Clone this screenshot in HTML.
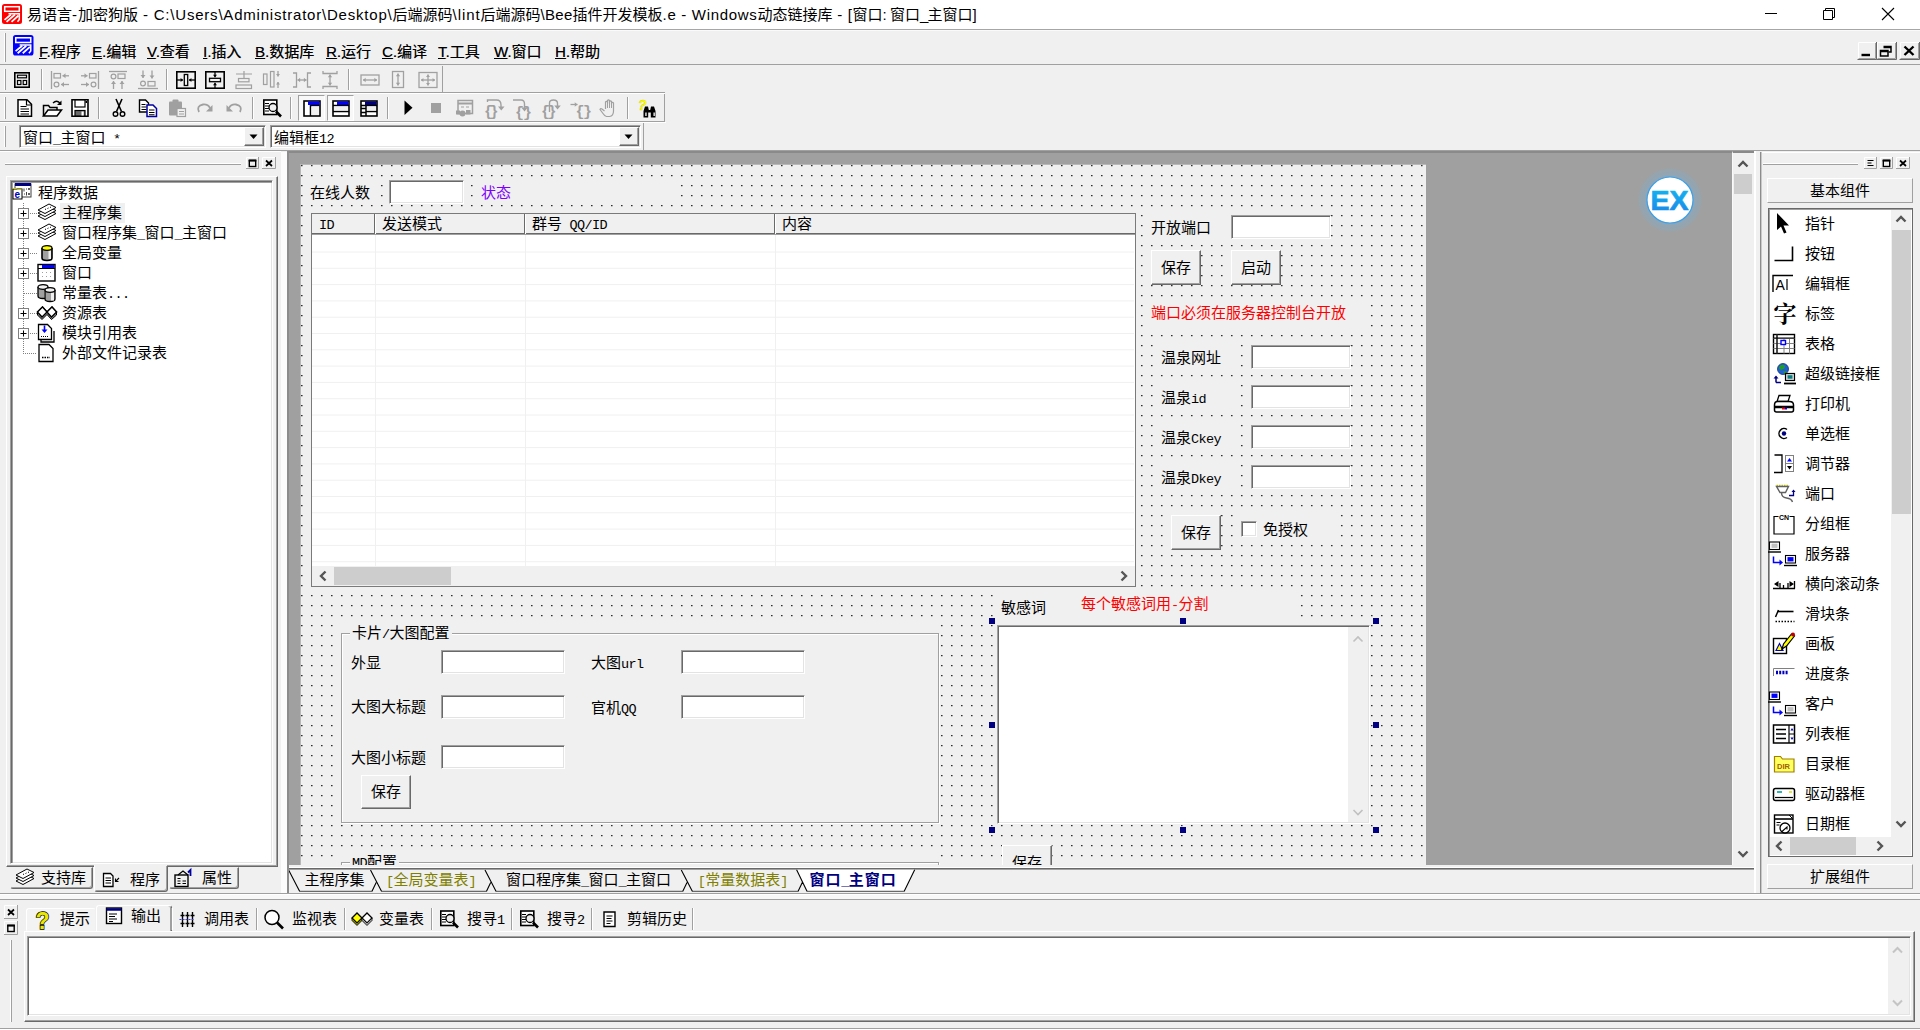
<!DOCTYPE html><html lang="zh-CN"><head><meta charset="utf-8"><title>易语言-加密狗版</title><style>
html,body{margin:0;padding:0}
body{width:1920px;height:1030px;overflow:hidden;background:#f0f0f0;position:relative;
 font-family:"Liberation Sans","Noto Sans CJK SC",sans-serif;font-size:15px;color:#000}
div,svg,span.a{position:absolute;box-sizing:border-box}
svg{overflow:visible}
.t{white-space:nowrap;line-height:20px;height:20px}
.s{font-family:"Liberation Mono","Noto Sans CJK SC",monospace;font-size:15px;letter-spacing:0;margin-top:2px}
.s b{font-weight:normal;font-family:"Liberation Mono",monospace;font-size:13.5px;letter-spacing:-0.6px}
.y{font-family:"Liberation Sans","Noto Sans CJK SC",sans-serif;font-size:15px}
.sunk{border:1px solid;border-color:#a0a0a0 #fff #fff #a0a0a0}
.sunk2{border:1px solid;border-color:#696969 #e3e3e3 #e3e3e3 #696969}
.rais{border:1px solid;border-color:#fff #a0a0a0 #a0a0a0 #fff}
.btn{background:#f0f0f0;border:1px solid;border-color:#fff #696969 #696969 #fff;box-shadow:inset -1px -1px 0 #a0a0a0;text-align:center}
.ed{background:#fff;border:1px solid;border-color:#a0a0a0 #fff #fff #a0a0a0;box-shadow:inset 1px 1px 0 #696969, inset -1px -1px 0 #e3e3e3}
.lbl{background:#f0f0f0}
.l{letter-spacing:0}
.hd{background:#000080;width:6px;height:6px}
</style></head><body>
<!-- p_chrome -->
<div style="left:0px;top:0px;width:1920px;height:30px;background:#fff;border-bottom:1px solid #a6a6a6"></div>
<svg style="left:2px;top:4px;" width="20" height="20" viewBox="0 0 20 20"><rect x="0" y="0" width="20" height="20" rx="2.500" fill="#ff0000"/><rect x="2.700" y="2.700" width="14.600" height="4.600" fill="none" stroke="#fff" stroke-width="1.500"/><path d="M6.500 9.700H17.300V15.500L15.500 17.800" fill="none" stroke="#fff" stroke-width="1.500"/><path d="M9 10.500L2.500 15.800M13 10.500L4.500 17.800M16.500 11.500L9.500 17.800" fill="none" stroke="#fff" stroke-width="1.700"/></svg>
<div id="ttl" class="t y" style="left:27px;top:5px">易语言<span style="letter-spacing:1.0px">-</span>加密狗版<span style="letter-spacing:0.792px"> - C:\Users\Administrator\Desktop\</span>后端源码<span style="letter-spacing:0.931px">\lint</span>后端源码<span style="letter-spacing:0.285px">\Bee</span>插件开发模板<span style="letter-spacing:0.691px">.e - Windows</span>动态链接库<span style="letter-spacing:0.625px"> - [</span>窗口<span style="letter-spacing:-0.422px">: </span>窗口<span style="letter-spacing:-0.844px">_</span>主窗口<span style="letter-spacing:0.328px">]</span></div>
<svg style="left:1760px;top:0px;" width="160" height="30" viewBox="0 0 160 30"><path d="M5 13.5h12" stroke="#000" stroke-width="1"/><path d="M63.5 10.5h9v9h-9zM65.5 10.5v-2h9v9h-2" stroke="#000" stroke-width="1" fill="none"/><path d="M122 8l12 12M134 8l-12 12" stroke="#000" stroke-width="1.1"/></svg>
<div style="left:0px;top:30px;width:1920px;height:35px;background:#f0f0f0;border-bottom:1px solid #a0a0a0"></div>
<div style="left:0px;top:30px;width:1920px;height:1px;background:#fafafa"></div>
<div style="left:4px;top:33px;width:2px;height:29px;border-left:1px solid #fff;border-right:1px solid #a0a0a0"></div>
<svg style="left:12.5px;top:35px;" width="20.5" height="20.5" viewBox="0 0 20 20"><rect x="0" y="0" width="20" height="20" rx="2.500" fill="#0000ff"/><rect x="2.700" y="2.700" width="14.600" height="4.600" fill="none" stroke="#fff" stroke-width="1.500"/><path d="M6.500 9.700H17.300V15.500L15.500 17.800" fill="none" stroke="#fff" stroke-width="1.500"/><path d="M9 10.500L2.500 15.800M13 10.500L4.500 17.800M16.500 11.500L9.500 17.800" fill="none" stroke="#fff" stroke-width="1.700"/></svg>
<div class="t y" style="left:39px;top:42px;text-shadow:0.300px 0 0 rgba(0,0,0,0.600)"><u>F</u>.程序</div>
<div class="t y" style="left:92px;top:42px;text-shadow:0.300px 0 0 rgba(0,0,0,0.600)"><u>E</u>.编辑</div>
<div class="t y" style="left:147px;top:42px;text-shadow:0.300px 0 0 rgba(0,0,0,0.600)"><u>V</u>.查看</div>
<div class="t y" style="left:203px;top:42px;text-shadow:0.300px 0 0 rgba(0,0,0,0.600)"><u>I</u>.插入</div>
<div class="t y" style="left:255px;top:42px;text-shadow:0.300px 0 0 rgba(0,0,0,0.600)"><u>B</u>.数据库</div>
<div class="t y" style="left:326px;top:42px;text-shadow:0.300px 0 0 rgba(0,0,0,0.600)"><u>R</u>.运行</div>
<div class="t y" style="left:382px;top:42px;text-shadow:0.300px 0 0 rgba(0,0,0,0.600)"><u>C</u>.编译</div>
<div class="t y" style="left:438px;top:42px;text-shadow:0.300px 0 0 rgba(0,0,0,0.600)"><u>T</u>.工具</div>
<div class="t y" style="left:494px;top:42px;text-shadow:0.300px 0 0 rgba(0,0,0,0.600)"><u>W</u>.窗口</div>
<div class="t y" style="left:555px;top:42px;text-shadow:0.300px 0 0 rgba(0,0,0,0.600)"><u>H</u>.帮助</div>
<svg style="left:1858px;top:42px;" width="19" height="18" viewBox="0 0 19 18"><rect x="0" y="0" width="19" height="18" fill="#f0f0f0"/><path d="M0.500 17.500v-17h18" stroke="#fff" fill="none"/><path d="M18.5 0v17.500h-19" stroke="#696969" fill="none"/><path d="M17.5 1v15.500h-17" stroke="#a0a0a0" fill="none"/><path d="M3.500 13h8.500" stroke="#000" stroke-width="2.400"/></svg><svg style="left:1877px;top:42px;" width="20" height="18" viewBox="0 0 20 18"><rect x="0" y="0" width="20" height="18" fill="#f0f0f0"/><path d="M0.500 17.500v-17h19" stroke="#fff" fill="none"/><path d="M19.5 0v17.500h-20" stroke="#696969" fill="none"/><path d="M18.5 1v15.500h-18" stroke="#a0a0a0" fill="none"/><path d="M6.500 4.500h7.500v5.500h-2.500M6.500 5.500h7.500" stroke="#000" stroke-width="1.500" fill="none"/><path d="M3.500 8.500h7.500v5.500h-7.500zM3.500 9.500h7.500" stroke="#000" stroke-width="1.500" fill="none"/></svg><svg style="left:1900px;top:42px;" width="20" height="18" viewBox="0 0 20 18"><rect x="0" y="0" width="20" height="18" fill="#f0f0f0"/><path d="M0.500 17.500v-17h19" stroke="#fff" fill="none"/><path d="M19.5 0v17.500h-20" stroke="#696969" fill="none"/><path d="M18.5 1v15.500h-18" stroke="#a0a0a0" fill="none"/><path d="M4.500 4.500l9 8.500M13.500 4.500l-9 8.500" stroke="#000" stroke-width="2.400"/></svg>
<div style="left:0px;top:66px;width:443px;height:27px;border-right:1px solid #a0a0a0;border-bottom:1px solid #a0a0a0"></div>
<div style="left:0px;top:93px;width:444px;height:1px;background:#fff"></div>
<div style="left:443px;top:92px;width:222px;height:1px;background:#a0a0a0"></div>
<div style="left:443px;top:93px;width:222px;height:1px;background:#fff"></div>
<div style="left:4px;top:69px;width:2px;height:21px;border-left:1px solid #fff;border-right:1px solid #a0a0a0"></div>
<svg style="left:12px;top:70px;" width="20" height="20" viewBox="0 0 20 20"><rect x="2.8" y="2.8" width="14.4" height="14.4" fill="none" stroke="#000" stroke-width="1.6"/><rect x="5.5" y="5.2" width="9" height="2.6" fill="none" stroke="#000" stroke-width="1.2"/><rect x="5.5" y="10.5" width="3.4" height="4" fill="none" stroke="#000" stroke-width="1.2"/><rect x="11.2" y="10.5" width="3.4" height="4" fill="none" stroke="#000" stroke-width="1.2"/></svg><div style="left:41px;top:69px;width:2px;height:21px;border-left:1px solid #a0a0a0;border-right:1px solid #fff"></div><svg style="left:50px;top:70px;" width="20" height="20" viewBox="0 0 20 20"><path d="M1.5 1v18" stroke="#a0a0a0" stroke-width="1.3"/><rect x="4" y="3.5" width="6.5" height="4.5" fill="none" stroke="#a0a0a0" stroke-width="1.2"/><circle cx="6.5" cy="14.5" r="2.4" fill="none" stroke="#a0a0a0" stroke-width="1.2"/><path d="M19 5.8H12.5" stroke="#a0a0a0" stroke-width="1.3"/><path d="M12.5 5.8l3.0 -2.5v5.0z" fill="#a0a0a0"/><path d="M19 14.5H11" stroke="#a0a0a0" stroke-width="1.3"/><path d="M11 14.5l3.0 -2.5v5.0z" fill="#a0a0a0"/></svg><svg style="left:80px;top:70px;" width="20" height="20" viewBox="0 0 20 20"><path d="M18.5 1v18" stroke="#a0a0a0" stroke-width="1.3"/><rect x="9.5" y="3.5" width="6.5" height="4.5" fill="none" stroke="#a0a0a0" stroke-width="1.2"/><circle cx="13.5" cy="14.5" r="2.4" fill="none" stroke="#a0a0a0" stroke-width="1.2"/><path d="M1 5.8H7.5" stroke="#a0a0a0" stroke-width="1.3"/><path d="M7.5 5.8l-3.0 -2.5v5.0z" fill="#a0a0a0"/><path d="M1 14.5H9" stroke="#a0a0a0" stroke-width="1.3"/><path d="M9 14.5l-3.0 -2.5v5.0z" fill="#a0a0a0"/></svg><svg style="left:108px;top:70px;" width="20" height="20" viewBox="0 0 20 20"><path d="M1 1.5h18" stroke="#a0a0a0" stroke-width="1.3"/><circle cx="5.5" cy="6.5" r="2.4" fill="none" stroke="#a0a0a0" stroke-width="1.2"/><rect x="10" y="4" width="7" height="4.5" fill="none" stroke="#a0a0a0" stroke-width="1.2"/><path d="M5.5 19V11" stroke="#a0a0a0" stroke-width="1.3"/><path d="M5.5 11l-2.5 3.0h5.0z" fill="#a0a0a0"/><path d="M14 19V11" stroke="#a0a0a0" stroke-width="1.3"/><path d="M14 11l-2.5 3.0h5.0z" fill="#a0a0a0"/></svg><svg style="left:138px;top:70px;" width="20" height="20" viewBox="0 0 20 20"><path d="M0 18.5h20" stroke="#a0a0a0" stroke-width="1.3"/><circle cx="5" cy="13.5" r="2.4" fill="none" stroke="#a0a0a0" stroke-width="1.2"/><rect x="10" y="11.5" width="7" height="4.5" fill="none" stroke="#a0a0a0" stroke-width="1.2"/><path d="M5 0.5V8" stroke="#a0a0a0" stroke-width="1.3"/><path d="M5 8l-2.5 -3.0h5.0z" fill="#a0a0a0"/><path d="M14 0.5V8.5" stroke="#a0a0a0" stroke-width="1.3"/><path d="M14 8.5l-2.5 -3.0h5.0z" fill="#a0a0a0"/></svg><div style="left:166px;top:69px;width:2px;height:21px;border-left:1px solid #a0a0a0;border-right:1px solid #fff"></div><svg style="left:176px;top:70px;" width="20" height="20" viewBox="0 0 20 20"><rect x="0.8" y="1.8" width="18.4" height="16.4" fill="none" stroke="#000" stroke-width="1.6"/><rect x="8.3" y="4.5" width="3.4" height="11" fill="none" stroke="#000" stroke-width="1.3"/><path d="M1 10H7" stroke="#000" stroke-width="1.3"/><path d="M7 10l-2.4 -2v4z" fill="#000"/><path d="M19 10H13" stroke="#000" stroke-width="1.3"/><path d="M13 10l2.4 -2v4z" fill="#000"/></svg><svg style="left:205px;top:70px;" width="20" height="20" viewBox="0 0 20 20"><rect x="0.8" y="1.8" width="18.4" height="16.4" fill="none" stroke="#000" stroke-width="1.6"/><rect x="4.5" y="8.3" width="11" height="3.4" fill="none" stroke="#000" stroke-width="1.3"/><path d="M10 2V7.2" stroke="#000" stroke-width="1.3"/><path d="M10 7.2l-2 -2.4h4z" fill="#000"/><path d="M10 18V12.8" stroke="#000" stroke-width="1.3"/><path d="M10 12.8l-2 2.4h4z" fill="#000"/></svg><svg style="left:234px;top:70px;" width="20" height="20" viewBox="0 0 20 20"><rect x="2" y="15" width="15.5" height="3.5" fill="none" stroke="#a0a0a0" stroke-width="1.2"/><rect x="4.5" y="8.5" width="10.5" height="3.3" fill="none" stroke="#a0a0a0" stroke-width="1.2"/><path d="M10 1v7M2 4h16" stroke="#a0a0a0" stroke-width="1.2"/></svg><svg style="left:262px;top:70px;" width="20" height="20" viewBox="0 0 20 20"><rect x="1.5" y="4" width="3.5" height="10.5" fill="none" stroke="#a0a0a0" stroke-width="1.2"/><rect x="8.5" y="1.5" width="3.5" height="15.5" fill="none" stroke="#a0a0a0" stroke-width="1.2"/><path d="M16 1V6.5" stroke="#a0a0a0" stroke-width="1.3"/><path d="M16 6.5l-2 -2.4h4z" fill="#a0a0a0"/><path d="M16 18V12" stroke="#a0a0a0" stroke-width="1.3"/><path d="M16 12l-2 2.4h4z" fill="#a0a0a0"/></svg><svg style="left:292px;top:70px;" width="20" height="20" viewBox="0 0 20 20"><path d="M1 3h3.5v14H1M19 3h-3.5v14H19" fill="none" stroke="#a0a0a0" stroke-width="1.3"/><path d="M10 10H5.5" stroke="#a0a0a0" stroke-width="1.3"/><path d="M5.5 10l2.64 -2.2v4.4z" fill="#a0a0a0"/><path d="M10 10H14.5" stroke="#a0a0a0" stroke-width="1.3"/><path d="M14.5 10l-2.64 -2.2v4.4z" fill="#a0a0a0"/></svg><svg style="left:320px;top:70px;" width="20" height="20" viewBox="0 0 20 20"><path d="M3 1v2.5h14V1M3 19v-2.5h14V19" fill="none" stroke="#a0a0a0" stroke-width="1.3"/><path d="M10 10V4.5" stroke="#a0a0a0" stroke-width="1.3"/><path d="M10 4.5l-2.2 2.64h4.4z" fill="#a0a0a0"/><path d="M10 10V15.5" stroke="#a0a0a0" stroke-width="1.3"/><path d="M10 15.5l-2.2 -2.64h4.4z" fill="#a0a0a0"/></svg><div style="left:348px;top:69px;width:2px;height:21px;border-left:1px solid #a0a0a0;border-right:1px solid #fff"></div><svg style="left:360px;top:70px;" width="20" height="20" viewBox="0 0 20 20"><rect x="1" y="5" width="18" height="10" fill="none" stroke="#a0a0a0" stroke-width="1.3"/><path d="M10 10H3" stroke="#a0a0a0" stroke-width="1.3"/><path d="M3 10l2.64 -2.2v4.4z" fill="#a0a0a0"/><path d="M10 10H17" stroke="#a0a0a0" stroke-width="1.3"/><path d="M17 10l-2.64 -2.2v4.4z" fill="#a0a0a0"/></svg><svg style="left:388px;top:70px;" width="20" height="20" viewBox="0 0 20 20"><rect x="4.5" y="1.5" width="11" height="16" fill="none" stroke="#a0a0a0" stroke-width="1.3"/><path d="M10 10V3.5" stroke="#a0a0a0" stroke-width="1.3"/><path d="M10 3.5l-2.2 2.64h4.4z" fill="#a0a0a0"/><path d="M10 10V15.5" stroke="#a0a0a0" stroke-width="1.3"/><path d="M10 15.5l-2.2 -2.64h4.4z" fill="#a0a0a0"/></svg><svg style="left:418px;top:70px;" width="20" height="20" viewBox="0 0 20 20"><rect x="1" y="2.5" width="18" height="15" fill="none" stroke="#a0a0a0" stroke-width="1.3"/><path d="M10 10H3" stroke="#a0a0a0" stroke-width="1.3"/><path d="M3 10l2.4 -2v4z" fill="#a0a0a0"/><path d="M10 10H17" stroke="#a0a0a0" stroke-width="1.3"/><path d="M17 10l-2.4 -2v4z" fill="#a0a0a0"/><path d="M10 10V4.5" stroke="#a0a0a0" stroke-width="1.3"/><path d="M10 4.5l-2 2.4h4z" fill="#a0a0a0"/><path d="M10 10V15.5" stroke="#a0a0a0" stroke-width="1.3"/><path d="M10 15.5l-2 -2.4h4z" fill="#a0a0a0"/></svg>
<div style="left:0px;top:94px;width:665px;height:28px;border-right:1px solid #a0a0a0;border-bottom:1px solid #a0a0a0"></div>
<div style="left:0px;top:122px;width:666px;height:1px;background:#fff"></div>
<div style="left:4px;top:97px;width:2px;height:22px;border-left:1px solid #fff;border-right:1px solid #a0a0a0"></div>
<svg style="left:15px;top:98px;" width="20" height="20" viewBox="0 0 20 20"><path d="M3 1.8h9l4.5 4.5V18.2H3z" fill="#fff" stroke="#000" stroke-width="1.5"/><path d="M11.5 2v5h5" fill="none" stroke="#000" stroke-width="1.2"/><path d="M5.5 8.5h6M5.5 11h8.5M5.5 13.500h8.5M5.500 16h8.500" stroke="#000" stroke-width="1.2"/></svg><svg style="left:42px;top:98px;" width="20" height="20" viewBox="0 0 20 20"><path d="M1.500 18V7.500h5l1.500 2h7V12" fill="none" stroke="#000" stroke-width="1.500"/><path d="M1.500 18l4.500-6h13.500l-4.500 6z" fill="#fff" stroke="#000" stroke-width="1.500"/><path d="M11 5q3.500-3.500 7 0" fill="none" stroke="#000" stroke-width="1.300"/><path d="M19.500 2.500v4.500h-4.500z" fill="#000"/></svg><svg style="left:70px;top:98px;" width="20" height="20" viewBox="0 0 20 20"><path d="M2 1.800h16V18.200H2z" fill="#fff" stroke="#000" stroke-width="1.600"/><rect x="5" y="2" width="10" height="7" fill="#fff" stroke="#000" stroke-width="1.200"/><rect x="5" y="12.500" width="10" height="5.500" fill="#696969" stroke="#000" stroke-width="1.200"/><rect x="11.500" y="13.500" width="2.200" height="4" fill="#fff"/><rect x="15.500" y="3" width="1.500" height="2" fill="#000"/></svg><div style="left:98px;top:97px;width:2px;height:22px;border-left:1px solid #a0a0a0;border-right:1px solid #fff"></div><svg style="left:109px;top:98px;" width="20" height="20" viewBox="0 0 20 20"><path d="M7 1l5.500 12.500M13 1l-5.500 12.500" stroke="#000" stroke-width="1.600" fill="none"/><circle cx="6.500" cy="16" r="2.300" fill="none" stroke="#000" stroke-width="1.400"/><circle cx="13.500" cy="16" r="2.300" fill="none" stroke="#000" stroke-width="1.400"/></svg><svg style="left:138px;top:98px;" width="20" height="20" viewBox="0 0 20 20"><path d="M1.500 2h6l3 3v9h-9z" fill="#fff" stroke="#000" stroke-width="1.400"/><path d="M3.500 6.500h4M3.500 9h5M3.500 11.500h5" stroke="#000" stroke-width="1.100"/><path d="M9 7h6l3.500 3.500V18.500H9z" fill="#fff" stroke="#0000a0" stroke-width="1.500"/><path d="M11 12h5.500M11 14.500h5.500M11 16.800h5.500" stroke="#000" stroke-width="1.100"/></svg><svg style="left:167px;top:98px;" width="20" height="20" viewBox="0 0 20 20"><rect x="2" y="3.500" width="13" height="14" rx="1" fill="#a0a0a0"/><rect x="5.500" y="1.500" width="6" height="3.500" rx="1" fill="#a0a0a0"/><rect x="10" y="10.500" width="8.500" height="8" fill="#f0f0f0" stroke="#a0a0a0" stroke-width="1.200"/><path d="M12 13.500h5M12 16h5" stroke="#a0a0a0" stroke-width="1"/></svg><svg style="left:195px;top:98px;" width="20" height="20" viewBox="0 0 20 20"><path d="M4 14q-3-6 4-7.500q5-0.500 7 3.500" fill="none" stroke="#a0a0a0" stroke-width="1.800"/><path d="M17.500 7v6.500h-6.500z" fill="#a0a0a0"/></svg><svg style="left:224px;top:98px;" width="20" height="20" viewBox="0 0 20 20"><path d="M16 14q3-6-4-7.500q-5-0.500-7 3.500" fill="none" stroke="#a0a0a0" stroke-width="1.800"/><path d="M2.500 7v6.500h6.500z" fill="#a0a0a0"/></svg><div style="left:252px;top:97px;width:2px;height:22px;border-left:1px solid #a0a0a0;border-right:1px solid #fff"></div><svg style="left:262px;top:98px;" width="20" height="20" viewBox="0 0 20 20"><rect x="1.800" y="2" width="13" height="14.500" fill="#fff" stroke="#000" stroke-width="1.600"/><path d="M3 5.500h4M3 8h4M3 10.500h4M3 13h4" stroke="#000" stroke-width="1.200"/><circle cx="11" cy="9.500" r="4" fill="#f0f0f0" stroke="#000" stroke-width="1.300"/><path d="M14 13.500l5 5" stroke="#000" stroke-width="2.600"/></svg><div style="left:290px;top:97px;width:2px;height:22px;border-left:1px solid #a0a0a0;border-right:1px solid #fff"></div><div style="left:298px;top:95px;width:27px;height:26px;background:#f8f8f8;border:1px solid;border-color:#a0a0a0 #fff #fff #a0a0a0"></div><div style="left:327px;top:95px;width:27px;height:26px;background:#f8f8f8;border:1px solid;border-color:#a0a0a0 #fff #fff #a0a0a0"></div><svg style="left:302px;top:98px;" width="20" height="20" viewBox="0 0 20 20"><rect x="2" y="3" width="16" height="15" fill="#fff" stroke="#000" stroke-width="1.600"/><rect x="6" y="3.500" width="11.500" height="3.500" fill="#0000ff"/><path d="M8.500 7v11M8.500 7.500h9" stroke="#000" stroke-width="1.500"/><rect x="9.500" y="8.500" width="7.500" height="8.500" fill="#f0f0f0"/></svg><svg style="left:331px;top:98px;" width="20" height="20" viewBox="0 0 20 20"><rect x="2" y="3" width="16" height="15" fill="#fff" stroke="#000" stroke-width="1.600"/><rect x="6" y="3.500" width="11.500" height="3.500" fill="#0000ff"/><path d="M2 7.500h16M2 13.500h16" stroke="#000" stroke-width="1.500"/><rect x="3" y="8.500" width="14" height="4" fill="#f0f0f0"/></svg><svg style="left:359px;top:98px;" width="20" height="20" viewBox="0 0 20 20"><rect x="2" y="3" width="16" height="15" fill="#fff" stroke="#000" stroke-width="1.600"/><rect x="6" y="3.500" width="11.500" height="3.500" fill="#000080"/><path d="M7 7v11M2 7.500h16M7 13.500h11M2 10.500h5M2 14.500h5" stroke="#000" stroke-width="1.500"/><rect x="8" y="8.500" width="9" height="4" fill="#f0f0f0"/></svg><div style="left:387px;top:97px;width:2px;height:22px;border-left:1px solid #a0a0a0;border-right:1px solid #fff"></div><svg style="left:398px;top:98px;" width="20" height="20" viewBox="0 0 20 20"><path d="M6.500 2.500v14.500l8-7.250z" fill="#000"/></svg><svg style="left:426px;top:98px;" width="20" height="20" viewBox="0 0 20 20"><rect x="5" y="5" width="10" height="10" fill="#a0a0a0"/></svg><svg style="left:454px;top:98px;" width="20" height="20" viewBox="0 0 20 20"><rect x="4" y="2.500" width="14.500" height="13" fill="none" stroke="#a0a0a0" stroke-width="1.500"/><path d="M4 5.500h14.500" stroke="#a0a0a0" stroke-width="2"/><path d="M7 9h3M12 9h3" stroke="#a0a0a0" stroke-width="1.200"/><circle cx="8.500" cy="15.500" r="3" fill="#a0a0a0"/><rect x="2" y="12.500" width="4" height="4" fill="#a0a0a0"/><rect x="12" y="12" width="4.500" height="4.500" fill="#a0a0a0"/></svg><svg style="left:484px;top:98px;" width="20" height="20" viewBox="0 0 20 20"><text x="0" y="17.500" font-family="Liberation Mono,monospace" font-size="15" font-weight="bold" fill="#a0a0a0" letter-spacing="-3.500">{}</text><path d="M3.500 4V2h9q4.500 0 4.500 5V9" fill="none" stroke="#a0a0a0" stroke-width="1.400"/><path d="M14 8.500h6.500l-3.250 4z" fill="#a0a0a0"/></svg><svg style="left:512px;top:98px;" width="20" height="20" viewBox="0 0 20 20"><text x="3" y="18.500" font-family="Liberation Mono,monospace" font-size="15" font-weight="bold" fill="#a0a0a0" letter-spacing="-1">{}</text><path d="M1 2h8q3.500 0 3.500 4V10" fill="none" stroke="#a0a0a0" stroke-width="1.400"/><path d="M9.250 9.500h6.500l-3.250 4z" fill="#a0a0a0"/></svg><svg style="left:541px;top:98px;" width="20" height="20" viewBox="0 0 20 20"><text x="0" y="18" font-family="Liberation Mono,monospace" font-size="15" font-weight="bold" fill="#a0a0a0" letter-spacing="-2.500">{}</text><path d="M8.500 14V5q0-3 4-3t4 3.500V8" fill="none" stroke="#a0a0a0" stroke-width="1.400"/><path d="M13.250 7.500h6.500l-3.250 4z" fill="#a0a0a0"/></svg><svg style="left:570px;top:98px;" width="20" height="20" viewBox="0 0 20 20"><text x="5.500" y="18" font-family="Liberation Mono,monospace" font-size="15" font-weight="bold" fill="#a0a0a0" letter-spacing="-1.500">{}</text><path d="M0.5 6.5H7.5" stroke="#a0a0a0" stroke-width="1.3"/><path d="M7.5 6.5l-2.76 -2.3v4.6z" fill="#a0a0a0"/></svg><svg style="left:599px;top:98px;" width="20" height="20" viewBox="0 0 20 20"><path d="M6.500 11V4q1-1.200 2 0V2.500q1-1.200 2 0V3.500q1-1.200 2 0V5q1-1.200 2 0v8q0 5-4 5.500h-3q-2-0.500-3.500-3l-3-4q0.500-1.500 2-0.500l2.500 2" fill="none" stroke="#a0a0a0" stroke-width="1.200"/><path d="M8.500 4v6M10.500 3.500v6.500M12.500 5v5" stroke="#a0a0a0" stroke-width="1"/></svg><div style="left:627px;top:97px;width:2px;height:22px;border-left:1px solid #a0a0a0;border-right:1px solid #fff"></div><svg style="left:638px;top:98px;" width="20" height="20" viewBox="0 0 20 20"><text x="0" y="11.500" font-family="Liberation Sans,sans-serif" font-size="14" font-weight="bold" font-style="italic" fill="#ffff00" stroke="#d8d800" stroke-width="0.400">?</text><path d="M5.500 19.500v-6.500l1.500-4.500h3l0.800 3.500h1.400l0.800-3.500h3l1.500 4.500v6.500h-4.700v-5h-2.600v5z" fill="#000"/><rect x="7.300" y="14.500" width="1.300" height="3.500" fill="#fff"/><rect x="15.500" y="14.500" width="1.300" height="3.500" fill="#fff"/></svg>
<div style="left:0px;top:123px;width:644px;height:27px;border-right:1px solid #a0a0a0"></div>
<div style="left:4px;top:126px;width:2px;height:21px;border-left:1px solid #fff;border-right:1px solid #a0a0a0"></div>
<div class="ed" style="left:19px;top:125px;width:247px;height:23px;background:#fff"></div>
<div class="t s" style="left:23px;top:128px;">窗口<b>_</b>主窗口<b> *</b></div>
<div class="btn" style="left:244px;top:127px;width:20px;height:19px;"></div>
<svg style="left:244px;top:127px;" width="20" height="19" viewBox="0 0 20 19"><path d="M5.500 7.500h8l-4 4.500z" fill="#000"/></svg>
<div class="ed" style="left:270px;top:125px;width:371px;height:23px;background:#fff"></div>
<div class="t s" style="left:274px;top:128px;">编辑框<b>12</b></div>
<div class="btn" style="left:619px;top:127px;width:20px;height:19px;"></div>
<svg style="left:619px;top:127px;" width="20" height="19" viewBox="0 0 20 19"><path d="M5.500 7.500h8l-4 4.500z" fill="#000"/></svg>
<!-- p_left -->
<div style="left:5px;top:163px;width:236px;height:2px;border-top:1px solid #fff;border-bottom:1px solid #a0a0a0"></div>
<svg style="left:246px;top:157px;" width="13" height="12" viewBox="0 0 13 12"><rect width="13" height="12" fill="#f0f0f0"/><path d="M0.500 12V0.500H13" stroke="#fff" fill="none"/><path d="M12.5 0V11.5H0" stroke="#a0a0a0" fill="none"/><rect x="3.3" y="3.5" width="6.400" height="6" fill="none" stroke="#000" stroke-width="1.400"/><path d="M2.7 3.5h7.600" stroke="#000" stroke-width="2"/></svg>
<svg style="left:262px;top:157px;" width="14" height="12" viewBox="0 0 14 12"><rect width="14" height="12" fill="#f0f0f0"/><path d="M0.500 12V0.500H14" stroke="#fff" fill="none"/><path d="M13.5 0V11.5H0" stroke="#a0a0a0" fill="none"/><path d="M4.0 3.5l6 5.500M10.0 3.5l-6 5.500" stroke="#000" stroke-width="1.700"/></svg>
<div style="left:6px;top:176px;width:272px;height:691px;border:1px solid;border-color:#fff #696969 #696969 #fff;box-shadow:inset -1px -1px 0 #a0a0a0"></div>
<div style="left:10px;top:180px;width:263px;height:684px;background:#fff;border:1px solid;border-color:#a0a0a0 #fff #fff #a0a0a0;box-shadow:inset 1px 1px 0 #696969, inset 2px 2px 0 #a0a0a0, inset -1px -1px 0 #e3e3e3"></div>
<svg style="left:12px;top:182px;" width="60" height="190" viewBox="0 0 60 190"><path d="M11.500 21V171.500H25M11.500 31.500H25M11.500 51.500H25M11.500 71.500H25M11.500 91.500H25M11.500 111.500H25M11.500 131.500H25M11.500 151.500H25" fill="none" stroke="#808080" stroke-width="1" stroke-dasharray="1 1" shape-rendering="crispEdges"/></svg>
<svg style="left:12px;top:183px;" width="20" height="20" viewBox="0 0 20 20"><rect x="3" y="1" width="16" height="13" fill="#fff" stroke="#404040"/><rect x="3" y="0" width="16" height="3" fill="#000080"/><path d="M12 5.500v3M14.500 5.500v1M12 11h1M14.500 9v3.500M16.500 5.500h1v1h-1zM16.500 10.500h1v1h-1z" stroke="#404040" stroke-width="1"/><rect x="1" y="6" width="9" height="10" fill="#fff" stroke="#000"/><path d="M0.500 5.500h4l1 1h4" stroke="#c8c800" fill="none"/><text x="2.500" y="14.500" font-family="Liberation Sans,sans-serif" font-size="10" font-weight="bold" fill="#0000c0">e</text></svg>
<div class="t s" style="left:38px;top:183px;">程序数据</div>
<svg style="left:18px;top:208px;" width="11" height="11" viewBox="0 0 11 11"><rect x="0.500" y="0.500" width="10" height="10" fill="#fff" stroke="#808080"/><path d="M2.500 5.500h6M5.500 2.500v6" stroke="#000" stroke-width="1"/></svg>
<div style="left:60px;top:203px;width:65px;height:20px;background:#f0f0f0"></div>
<svg style="left:37px;top:203px;" width="20" height="20" viewBox="0 0 20 20"><path d="M1 13l11-6l7 3.500l-11 6z" fill="#fff" stroke="#000" stroke-width="1"/><path d="M1 10l11-6l7 3.500l-11 6z" fill="#fff" stroke="#000" stroke-width="1"/><path d="M1 7l11-6l7 3.500l-11 6z" fill="#fff" stroke="#000" stroke-width="1"/><path d="M8 6.500l1-0.500M10.500 5.500l1-0.500M13 4.500l1-0.500" stroke="#000" stroke-width="1"/></svg>
<div class="t s" style="left:62px;top:203px;">主程序集</div>
<svg style="left:18px;top:228px;" width="11" height="11" viewBox="0 0 11 11"><rect x="0.500" y="0.500" width="10" height="10" fill="#fff" stroke="#808080"/><path d="M2.500 5.500h6M5.500 2.500v6" stroke="#000" stroke-width="1"/></svg>
<svg style="left:37px;top:223px;" width="20" height="20" viewBox="0 0 20 20"><path d="M1 13l11-6l7 3.500l-11 6z" fill="#fff" stroke="#000" stroke-width="1"/><path d="M1 10l11-6l7 3.500l-11 6z" fill="#fff" stroke="#000" stroke-width="1"/><path d="M1 7l11-6l7 3.500l-11 6z" fill="#fff" stroke="#000" stroke-width="1"/><path d="M8 6.500l1-0.500M10.500 5.500l1-0.500M13 4.500l1-0.500" stroke="#000" stroke-width="1"/></svg>
<div class="t s" style="left:62px;top:223px;">窗口程序集<b>_</b>窗口<b>_</b>主窗口</div>
<svg style="left:18px;top:248px;" width="11" height="11" viewBox="0 0 11 11"><rect x="0.500" y="0.500" width="10" height="10" fill="#fff" stroke="#808080"/><path d="M2.500 5.500h6M5.500 2.500v6" stroke="#000" stroke-width="1"/></svg>
<svg style="left:37px;top:243px;" width="20" height="20" viewBox="0 0 20 20"><path d="M5 5v10q0 2.500 5 2.500t5-2.500V5" fill="#a0a0a0" stroke="#000" stroke-width="1.600"/><rect x="11.500" y="7" width="2.500" height="9" fill="#f0f0f0"/><ellipse cx="10" cy="5" rx="5" ry="2.300" fill="#ffff00" stroke="#000" stroke-width="1.300"/></svg>
<div class="t s" style="left:62px;top:243px;">全局变量</div>
<svg style="left:18px;top:268px;" width="11" height="11" viewBox="0 0 11 11"><rect x="0.500" y="0.500" width="10" height="10" fill="#fff" stroke="#808080"/><path d="M2.500 5.500h6M5.500 2.500v6" stroke="#000" stroke-width="1"/></svg>
<svg style="left:37px;top:263px;" width="20" height="20" viewBox="0 0 20 20"><rect x="1" y="1.500" width="17" height="16.500" fill="#fff" stroke="#000" stroke-width="1.400"/><rect x="5" y="2" width="12.500" height="3" fill="#0000ff"/><path d="M1 5.500h17" stroke="#000"/><path d="M5 9.500h1M9 9.500h1M13 9.500h1M5 13.500h1M9 13.500h1M13 13.500h1" stroke="#a0a0a0"/></svg>
<div class="t s" style="left:62px;top:263px;">窗口</div>
<svg style="left:37px;top:283px;" width="20" height="20" viewBox="0 0 20 20"><path d="M1 4v9q0 2.500 5 2.500t5-2.500V4" fill="#a0a0a0" stroke="#000" stroke-width="1.300"/><rect x="7" y="6" width="3" height="8.500" fill="#f0f0f0"/><ellipse cx="6" cy="4" rx="5" ry="2.300" fill="#f0f0f0" stroke="#000" stroke-width="1.300"/><path d="M8 7v9q0 2.500 5 2.500t5-2.500V7" fill="#a0a0a0" stroke="#000" stroke-width="1.300"/><rect x="14" y="9" width="3" height="8.500" fill="#f0f0f0"/><ellipse cx="13" cy="7" rx="5" ry="2.300" fill="#f0f0f0" stroke="#000" stroke-width="1.300"/></svg>
<div class="t s" style="left:62px;top:283px;">常量表<b>...</b></div>
<svg style="left:18px;top:308px;" width="11" height="11" viewBox="0 0 11 11"><rect x="0.500" y="0.500" width="10" height="10" fill="#fff" stroke="#808080"/><path d="M2.500 5.500h6M5.500 2.500v6" stroke="#000" stroke-width="1"/></svg>
<svg style="left:37px;top:303px;" width="20" height="20" viewBox="0 0 20 20"><path d="M0.500 9l5-5l4.500 5l-5 5z" fill="#fff" stroke="#000" stroke-width="1.500"/><path d="M10 9l5-5l4.500 5l-5 5z" fill="#fff" stroke="#000" stroke-width="1.500"/><path d="M0.500 9v3l4.500 4.500l5-5l4.500 5l5-4.500V9" fill="#808080" stroke="#000" stroke-width="1"/><path d="M0.500 9l5-5l4.500 5l-5 5zM10 9l5-5l4.500 5l-5 5z" fill="#fff" stroke="#000" stroke-width="1.300"/></svg>
<div class="t s" style="left:62px;top:303px;">资源表</div>
<svg style="left:18px;top:328px;" width="11" height="11" viewBox="0 0 11 11"><rect x="0.500" y="0.500" width="10" height="10" fill="#fff" stroke="#808080"/><path d="M2.500 5.500h6M5.500 2.500v6" stroke="#000" stroke-width="1"/></svg>
<svg style="left:37px;top:323px;" width="20" height="20" viewBox="0 0 20 20"><path d="M4 5v14h13V8" fill="#fff" stroke="#000" stroke-width="1.300"/><path d="M1.500 1.500h9l4 4v11h-13z" fill="#fff" stroke="#000" stroke-width="1.300"/><path d="M7.500 2.500v5" stroke="#0000ff" stroke-width="1.600"/><path d="M4.500 6.500h6l-3 3.500z" fill="#0000ff"/><path d="M4 13.500h8" stroke="#000" stroke-dasharray="1 1"/></svg>
<div class="t s" style="left:62px;top:323px;">模块引用表</div>
<svg style="left:37px;top:343px;" width="20" height="20" viewBox="0 0 20 20"><path d="M2 1.500h10l4 4v13h-14z" fill="#fff" stroke="#000" stroke-width="1.300"/><path d="M5 14.500h8" stroke="#000" stroke-width="1.500" stroke-dasharray="1.500 1"/></svg>
<div class="t s" style="left:62px;top:343px;">外部文件记录表</div>
<div style="left:10px;top:867px;width:83px;height:22px;border:1px solid;border-color:transparent #696969 #696969 transparent;box-shadow:inset -1px -1px 0 #a0a0a0;border-radius:0 0 3px 3px"></div>
<svg style="left:15px;top:868px;" width="20" height="20" viewBox="0 0 20 20"><path d="M1 13l11-6l7 3.500l-11 6z" fill="#fff" stroke="#000" stroke-width="1"/><path d="M1 10l11-6l7 3.500l-11 6z" fill="#fff" stroke="#000" stroke-width="1"/><path d="M1 7l11-6l7 3.500l-11 6z" fill="#fff" stroke="#000" stroke-width="1"/><path d="M8 6.500l1-0.500M10.500 5.500l1-0.500M13 4.500l1-0.500" stroke="#000" stroke-width="1"/></svg>
<div class="t s" style="left:41px;top:868px;">支持库</div>
<div style="left:94px;top:865px;width:74px;height:27px;background:#f0f0f0;border:1px solid;border-color:transparent #696969 #696969 #fff;box-shadow:inset -1px -1px 0 #a0a0a0;border-radius:0 0 3px 3px"></div>
<svg style="left:102px;top:872px;" width="20" height="20" viewBox="0 0 20 20"><path d="M1.500 1.500h7l2.500 2.500v10.500h-9.500z" fill="#fff" stroke="#000" stroke-width="1.300"/><path d="M3.500 6h5.500M3.500 8.500h5.500M3.500 11h5.500" stroke="#000" stroke-width="1"/><path d="M17 6l-3 3M13.500 6.500v3h3" stroke="#000" stroke-width="1.100" fill="none"/></svg>
<div class="t s" style="left:130px;top:870px;">程序</div>
<div style="left:169px;top:867px;width:70px;height:22px;border:1px solid;border-color:transparent #696969 #696969 transparent;box-shadow:inset -1px -1px 0 #a0a0a0;border-radius:0 0 3px 3px"></div>
<svg style="left:174px;top:869px;" width="20" height="20" viewBox="0 0 20 20"><rect x="1" y="6" width="13" height="11.500" fill="#f0f0f0" stroke="#000" stroke-width="1.400"/><path d="M3.500 9.500h3M3.500 12h3M3.500 14.500h3M8.500 12h3.500M8.500 14.500h3.500" stroke="#000" stroke-width="1.100"/><path d="M4 6l5-4l5 4" fill="none" stroke="#000" stroke-width="1.300"/><path d="M14 3.500l2.500-2.500v6" fill="none" stroke="#0000a0" stroke-width="1.800"/></svg>
<div class="t s" style="left:202px;top:868px;">属性</div>
<!-- p_form -->
<div style="left:0px;top:150px;width:1920px;height:1px;background:#a0a0a0"></div>
<div style="left:0px;top:151px;width:281px;height:1px;background:#fff"></div>
<div style="left:281px;top:152px;width:6px;height:741px;background:#fcfcfc"></div>
<div style="left:287px;top:151px;width:1445px;height:714px;background:#a0a0a0;overflow:hidden;border-top:2px solid #8a8a8a;border-left:2px solid #8c8c8c">
<div style="left:11px;top:11px;width:1126px;height:720px;background:#b8b8b8"></div>
<div style="left:12px;top:12px;width:1125px;height:720px;background:#f0f0f0"></div>
<svg style="left:12px;top:12px;" width="1125" height="700" viewBox="0 0 1125 700"><defs><pattern id="dots" width="10" height="10" patternUnits="userSpaceOnUse"><rect x="0.200" y="0" width="1.250" height="1.250" fill="#000"/></pattern></defs><rect width="1125" height="700" fill="url(#dots)"/></svg>
<div class="lbl" style="left:21px;top:27px;width:70px;height:24px;"></div>
<div class="t s" style="left:21px;top:30.0px;">在线人数</div>
<div class="ed" style="left:100px;top:27px;width:75px;height:24px;"></div>
<div class="lbl" style="left:192px;top:27px;width:199px;height:24px;"></div>
<div class="t s" style="left:192px;top:30.0px;color:#8000ff">状态</div>
<div style="left:22px;top:60px;width:825px;height:374px;background:#fff;border:1px solid #7a7a7a"></div>
<div style="left:23px;top:61px;width:823px;height:20px;background:#f0f0f0;border-bottom:1px solid #696969;box-shadow:0 1px 0 #a0a0a0"></div>
<div class="t s" style="left:30px;top:61px;"><b>ID</b></div>
<div style="left:85px;top:61px;width:2px;height:20px;border-left:1px solid #696969;border-right:1px solid #fff"></div>
<div class="t s" style="left:93px;top:61px;">发送模式</div>
<div style="left:235px;top:61px;width:2px;height:20px;border-left:1px solid #696969;border-right:1px solid #fff"></div>
<div class="t s" style="left:243px;top:61px;">群号<b> QQ/</b><b>ID</b></div>
<div style="left:485px;top:61px;width:2px;height:20px;border-left:1px solid #696969;border-right:1px solid #fff"></div>
<div class="t s" style="left:493px;top:61px;">内容</div>
<svg style="left:23px;top:82px;" width="823" height="331" viewBox="0 0 823 331"><path d="M0 17.00H822M0 33.30H822M0 49.60H822M0 65.90H822M0 82.20H822M0 98.50H822M0 114.80H822M0 131.10H822M0 147.40H822M0 163.70H822M0 180.00H822M0 196.30H822M0 212.60H822M0 228.90H822M0 245.20H822M0 261.50H822M0 277.80H822M0 294.10H822M0 310.40H822M0 326.70H822M63.5 0V331M213.5 0V331M463.5 0V331" stroke="#f0f0f0" stroke-width="1" fill="none"/></svg>
<div style="left:23px;top:413px;width:823px;height:20px;background:#f0f0f0"></div>
<div style="left:45px;top:414px;width:117px;height:18px;background:#cdcdcd"></div>
<svg style="left:23px;top:413px;" width="823" height="20" viewBox="0 0 823 20"><path d="M13.500 5.500l-4.500 4.500l4.500 4.500M809.500 5.500l4.500 4.500l-4.500 4.500" fill="none" stroke="#555" stroke-width="2.400"/></svg>
<div class="lbl" style="left:862px;top:62px;width:75px;height:24px;"></div>
<div class="t s" style="left:862px;top:65.0px;">开放端口</div>
<div class="ed" style="left:942px;top:62px;width:100px;height:24px;"></div>
<div class="btn" style="left:862px;top:97px;width:50px;height:35px;"></div>
<div class="t s" style="left:862px;top:104.5px;width:50px;text-align:center">保存</div>
<div class="btn" style="left:942px;top:97px;width:50px;height:35px;"></div>
<div class="t s" style="left:942px;top:104.5px;width:50px;text-align:center">启动</div>
<div class="lbl" style="left:862px;top:147px;width:212px;height:29px;"></div>
<div class="t s" style="left:862px;top:150px;color:#ff0000">端口必须在服务器控制台开放</div>
<div class="lbl" style="left:872px;top:192px;width:75px;height:24px;"></div>
<div class="t s" style="left:872px;top:195.0px;">温泉网址</div>
<div class="ed" style="left:962px;top:192px;width:100px;height:24px;"></div>
<div class="lbl" style="left:872px;top:232px;width:75px;height:24px;"></div>
<div class="t s" style="left:872px;top:235.0px;">温泉<b>id</b></div>
<div class="ed" style="left:962px;top:232px;width:100px;height:24px;"></div>
<div class="lbl" style="left:872px;top:272px;width:75px;height:24px;"></div>
<div class="t s" style="left:872px;top:275.0px;">温泉<b>Ckey</b></div>
<div class="ed" style="left:962px;top:272px;width:100px;height:24px;"></div>
<div class="lbl" style="left:872px;top:312px;width:75px;height:24px;"></div>
<div class="t s" style="left:872px;top:315.0px;">温泉<b>Dkey</b></div>
<div class="ed" style="left:962px;top:312px;width:100px;height:24px;"></div>
<div class="btn" style="left:882px;top:362px;width:50px;height:35px;"></div>
<div class="t s" style="left:882px;top:369.5px;width:50px;text-align:center">保存</div>
<div class="lbl" style="left:952px;top:362px;width:100px;height:28px;"></div>
<div style="left:952px;top:368px;width:16px;height:16px;background:#fff;border:1px solid;border-color:#a0a0a0 #fff #fff #a0a0a0;box-shadow:inset 1px 1px 0 #696969, inset -1px -1px 0 #e3e3e3"></div>
<div class="t s" style="left:974px;top:367px;">免授权</div>
<div class="lbl" style="left:712px;top:442px;width:300px;height:30px;"></div>
<div class="t s" style="left:712px;top:445px;">敏感词</div>
<div class="t s" style="left:792px;top:440.5px;color:#ff0000">每个敏感词用<b>-</b>分割</div>
<div style="left:708px;top:472px;width:373px;height:199px;background:#fff;border:1px solid;border-color:#a0a0a0 #fff #fff #a0a0a0;box-shadow:inset 1px 1px 0 #696969, inset -1px -1px 0 #e3e3e3"></div>
<div style="left:1059px;top:474px;width:20px;height:195px;background:#f0f0f0"></div>
<svg style="left:1059px;top:474px;" width="20" height="195" viewBox="0 0 20 195"><path d="M5.500 14.500l4.500-4.500l4.500 4.500M5.500 183l4.500 4.500l4.500-4.500" fill="none" stroke="#c0c0c0" stroke-width="1.600"/></svg>
<div class="hd" style="left:700px;top:465px;width:6px;height:6px;"></div>
<div class="hd" style="left:700px;top:568.5px;width:6px;height:6px;"></div>
<div class="hd" style="left:700px;top:673.5px;width:6px;height:6px;"></div>
<div class="hd" style="left:891px;top:465px;width:6px;height:6px;"></div>
<div class="hd" style="left:891px;top:673.5px;width:6px;height:6px;"></div>
<div class="hd" style="left:1083.5px;top:465px;width:6px;height:6px;"></div>
<div class="hd" style="left:1083.5px;top:568.5px;width:6px;height:6px;"></div>
<div class="hd" style="left:1083.5px;top:673.5px;width:6px;height:6px;"></div>
<div class="btn" style="left:713px;top:692px;width:50px;height:35px;"></div>
<div class="t s" style="left:713px;top:699.5px;width:50px;text-align:center">保存</div>
<div class="lbl" style="left:52px;top:472px;width:599px;height:199px;"></div>
<div style="left:52px;top:480px;width:598px;height:190px;border:1px solid #a0a0a0;box-shadow:inset 1px 1px 0 #fff, 1px 1px 0 #fff"></div>
<div class="lbl" style="left:61px;top:472px;width:102px;height:18px;"></div>
<div class="t s" style="left:63px;top:470px;">卡片<b>/</b>大图配置</div>
<div class="t s" style="left:62px;top:500px;">外显</div>
<div class="ed" style="left:152px;top:497px;width:124px;height:24px;"></div>
<div class="t s" style="left:62px;top:544px;">大图大标题</div>
<div class="ed" style="left:152px;top:542px;width:124px;height:24px;"></div>
<div class="t s" style="left:62px;top:595px;">大图小标题</div>
<div class="ed" style="left:152px;top:592px;width:124px;height:24px;"></div>
<div class="t s" style="left:302px;top:500px;">大图<b>url</b></div>
<div class="ed" style="left:392px;top:497px;width:124px;height:24px;"></div>
<div class="t s" style="left:302px;top:545px;">官机<b>QQ</b></div>
<div class="ed" style="left:392px;top:542px;width:124px;height:24px;"></div>
<div class="btn" style="left:72px;top:622px;width:50px;height:34px;"></div>
<div class="t s" style="left:72px;top:629.0px;width:50px;text-align:center">保存</div>
<div class="lbl" style="left:52px;top:701px;width:599px;height:100px;"></div>
<div style="left:52px;top:709px;width:598px;height:91px;border:1px solid #a0a0a0;box-shadow:inset 1px 1px 0 #fff, 1px 1px 0 #fff"></div>
<div class="lbl" style="left:61px;top:701px;width:49px;height:18px;"></div>
<div class="t s" style="left:63px;top:699px;"><b>MD</b>配置</div>
</div>
<div style="left:1732px;top:151px;width:22px;height:714px;background:#f0f0f0;border-top:2px solid #8a8a8a;border-left:1px solid #fafafa"></div>
<div style="left:1734px;top:174px;width:18px;height:20px;background:#cdcdcd"></div>
<svg style="left:1732px;top:152px;" width="22" height="713" viewBox="0 0 22 713"><path d="M6.500 14.500l4.500-4.500l4.500 4.500M6.500 699.500l4.500 4.500l4.500-4.500" fill="none" stroke="#555" stroke-width="2.400"/></svg>
<svg style="left:1630px;top:160px;" width="80" height="80" viewBox="0 0 80 80"><defs><radialGradient id="gl"><stop offset="0.720" stop-color="#8fa6b6" stop-opacity="1"/><stop offset="0.930" stop-color="#96a4ad" stop-opacity="0.900"/><stop offset="1" stop-color="#a0a0a0" stop-opacity="0"/></radialGradient><linearGradient id="eg" x1="0" x2="0" y1="0" y2="1"><stop offset="0" stop-color="#12b8f0"/><stop offset="1" stop-color="#1a84e8"/></linearGradient></defs><circle cx="40" cy="40" r="33" fill="url(#gl)"/><circle cx="40" cy="40" r="23" fill="#fff" stroke="#3aa0ea" stroke-width="1.200"/><text x="20.400" y="50" font-family="Liberation Sans,sans-serif" font-weight="bold" font-size="27" textLength="38" lengthAdjust="spacingAndGlyphs" fill="url(#eg)" stroke="url(#eg)" stroke-width="0.700">EX</text></svg>
<div style="left:287px;top:865px;width:1467px;height:3px;background:#f0f0f0;border-bottom:1px solid #fff"></div>
<div style="left:287px;top:868px;width:1467px;height:2px;background:#696969;border-bottom:1px solid #a0a0a0"></div>
<svg style="left:280px;top:860px;" width="660" height="36" viewBox="0 0 660 36"><path d="M516.6 9.7L527 31.3H624.2L634.7 9.7z" fill="#fff" stroke="none"/><path d="M19.3 31.3H92.3M101.2 31.3H206.8M215.7 31.3H403.1M412.0 31.3H518.4M526.7 31.3H624.5" fill="none" stroke="#6a6a6a" stroke-width="1.200"/><path d="M8.6 10L19.6 31.3M92.0 31.3L96.2 22.6M90.5 10L101.5 31.3M206.5 31.3L210.7 22.6M205.0 10L216.0 31.3M402.8 31.3L407.0 22.6M401.3 10L412.3 31.3M518.1 31.3L522.3 22.6M516.6 9.7L527 31.3M624.2 31.3L634.7 9.7" fill="none" stroke="#000" stroke-width="1.100"/></svg>
<div style="left:287px;top:865px;width:2px;height:28px;background:#8c8c8c"></div>
<div class="t s" style="left:304.5px;top:870px;color:#000;">主程序集</div>
<div class="t s" style="left:386px;top:870px;color:#808000;"><b>[</b>全局变量表<b>]</b></div>
<div class="t s" style="left:506px;top:870px;color:#000;">窗口程序集<b>_</b>窗口<b>_</b>主窗口</div>
<div class="t s" style="left:697.7px;top:870px;color:#808000;"><b>[</b>常量数据表<b>]</b></div>
<div class="t s" style="left:809.5px;top:870px;color:#000080;font-weight:bold;letter-spacing:0.900px;">窗口<b>_</b>主窗口</div>
<!-- p_right -->
<div style="left:1754px;top:151px;width:2px;height:743px;background:#fff"></div>
<div style="left:1760px;top:152px;width:2px;height:742px;border-left:1px solid #8c8c8c;border-right:1px solid #c8c8c8"></div>
<div style="left:1762px;top:152px;width:158px;height:1px;background:#fff"></div>
<div style="left:1763px;top:163px;width:95px;height:2px;border-top:1px solid #fff;border-bottom:1px solid #a0a0a0"></div>
<svg style="left:1864px;top:157px;" width="13" height="12" viewBox="0 0 13 12"><rect width="13" height="12" fill="#f0f0f0"/><path d="M0.500 12V0.500H13" stroke="#fff" fill="none"/><path d="M12.5 0V11.5H0" stroke="#a0a0a0" fill="none"/><path d="M3.5 3.5h6M3.5 6.0h4M3.5 8.5h6" stroke="#000" stroke-width="1"/></svg>
<svg style="left:1880px;top:157px;" width="13" height="12" viewBox="0 0 13 12"><rect width="13" height="12" fill="#f0f0f0"/><path d="M0.500 12V0.500H13" stroke="#fff" fill="none"/><path d="M12.5 0V11.5H0" stroke="#a0a0a0" fill="none"/><rect x="3.3" y="3.5" width="6.400" height="6" fill="none" stroke="#000" stroke-width="1.400"/><path d="M2.7 3.5h7.600" stroke="#000" stroke-width="2"/></svg>
<svg style="left:1896px;top:157px;" width="14" height="12" viewBox="0 0 14 12"><rect width="14" height="12" fill="#f0f0f0"/><path d="M0.500 12V0.500H14" stroke="#fff" fill="none"/><path d="M13.5 0V11.5H0" stroke="#a0a0a0" fill="none"/><path d="M4.0 3.5l6 5.500M10.0 3.5l-6 5.500" stroke="#000" stroke-width="1.700"/></svg>
<div class="btn" style="left:1767px;top:178px;width:146px;height:25px;border-color:#fff #a0a0a0 #a0a0a0 #fff;box-shadow:none"></div>
<div class="t s" style="left:1767px;top:181px;width:146px;text-align:center">基本组件</div>
<div style="left:1768px;top:208px;width:145px;height:649px;background:#fff;border:1px solid #696969;box-shadow:inset 1px 1px 0 #a0a0a0"></div>
<svg style="left:1772px;top:212px;" width="24" height="24" viewBox="0 0 24 24"><path d="M5 1v17l4-3.500l3 7l2.500-1l-3-7h5.500z" fill="#000"/></svg>
<div class="t s" style="left:1805px;top:214px;">指针</div>
<svg style="left:1772px;top:242px;" width="24" height="24" viewBox="0 0 24 24"><path d="M2.500 18.500h18v-14" fill="none" stroke="#000" stroke-width="1.600"/><path d="M5 3.500h12" stroke="#fff" stroke-width="1"/></svg>
<div class="t s" style="left:1805px;top:244px;">按钮</div>
<svg style="left:1772px;top:272px;" width="24" height="24" viewBox="0 0 24 24"><path d="M1 20V3.500h20" fill="none" stroke="#000" stroke-width="1.400"/><text x="3.500" y="18" font-family="Liberation Sans,sans-serif" font-size="14" fill="#000">A</text><path d="M15 7v11" stroke="#000" stroke-width="1.200"/></svg>
<div class="t s" style="left:1805px;top:274px;">编辑框</div>
<svg style="left:1772px;top:302px;" width="24" height="24" viewBox="0 0 24 24"><text x="1.500" y="20" font-family="Noto Serif CJK SC,serif" font-size="23" font-weight="bold" fill="#000">字</text></svg>
<div class="t s" style="left:1805px;top:304px;">标签</div>
<svg style="left:1772px;top:332px;" width="24" height="24" viewBox="0 0 24 24"><rect x="1.500" y="2.500" width="21" height="19" fill="#fff" stroke="#000" stroke-width="1.400"/><path d="M5 2.500v19M1.500 6.500h21M1.500 11.500h21M1.500 16.500h21M12 6.500v15M17.500 6.500v15" stroke="#808080" stroke-width="1" fill="none"/><path d="M5 2.500v19M1.500 6h21" stroke="#000" stroke-width="1.200"/><rect x="9" y="8.500" width="4.500" height="4" fill="#fff" stroke="#0000ff" stroke-width="1.400"/></svg>
<div class="t s" style="left:1805px;top:334px;">表格</div>
<svg style="left:1772px;top:362px;" width="24" height="24" viewBox="0 0 24 24"><circle cx="11" cy="7" r="5.500" fill="#2060d0" stroke="#103080" stroke-width="0.800"/><path d="M7 5q3-4 6-1q0 3-3 3.500q-3 1-3-2.500zM11 9.500q3-1 4 1l-2 2z" fill="#20a020"/><rect x="13.500" y="11.500" width="9" height="7" fill="#e0e0e0" stroke="#000" stroke-width="1.200"/><rect x="15.500" y="13.200" width="5" height="3.500" fill="#008080"/><path d="M12 21.500h12" stroke="#000" stroke-width="1.800"/><path d="M4 20.500v-5M9 20.500h-5" stroke="#000080" stroke-width="1.500" fill="none"/><path d="M1.500 16.500l2.500-3l2.500 3z" fill="#000080"/></svg>
<div class="t s" style="left:1805px;top:364px;">超级链接框</div>
<svg style="left:1772px;top:392px;" width="24" height="24" viewBox="0 0 24 24"><path d="M7 3.500h11l-2 6h-11z" fill="#fff" stroke="#000" stroke-width="1.300"/><path d="M2.500 13q0-3.500 3-3.500h12q4 0 4 3.500v5q0 2-2 2h-15q-2 0-2-2z" fill="#fff" stroke="#000" stroke-width="1.500"/><path d="M3 15h18" stroke="#000" stroke-width="2.500"/><path d="M10 16.500h3" stroke="#ff0000" stroke-width="2"/><path d="M13 16.500h2" stroke="#0000ff" stroke-width="2"/></svg>
<div class="t s" style="left:1805px;top:394px;">打印机</div>
<svg style="left:1772px;top:422px;" width="24" height="24" viewBox="0 0 24 24"><path d="M15 7.500a5 5 0 1 0 0 8" fill="none" stroke="#000" stroke-width="1.500"/><circle cx="12" cy="11.500" r="2.200" fill="#000080"/></svg>
<div class="t s" style="left:1805px;top:424px;">单选框</div>
<svg style="left:1772px;top:452px;" width="24" height="24" viewBox="0 0 24 24"><path d="M2.500 3h7.500v17.500h-8" fill="none" stroke="#000" stroke-width="1.300"/><rect x="13.500" y="3.500" width="8" height="16" fill="#fff" stroke="#808080" stroke-width="1"/><path d="M13.500 11.500h8" stroke="#808080"/><path d="M15 9.500l2.500-3.500l2.500 3.500z" fill="#0000ff"/><path d="M15 14l2.500 3.500l2.500-3.500z" fill="#000"/></svg>
<div class="t s" style="left:1805px;top:454px;">调节器</div>
<svg style="left:1772px;top:482px;" width="24" height="24" viewBox="0 0 24 24"><path d="M4.500 3.500h12" stroke="#c8c800" stroke-width="1.400" stroke-dasharray="1.500 1"/><path d="M4.500 4.500h12l-3 6h-5.500zM9.500 10.500q0 5 5 5.500q5 0.500 6 4" fill="#fff" stroke="#606060" stroke-width="1.400"/><path d="M17 13.500h4.500v-4" fill="none" stroke="#000080" stroke-width="1.300"/><path d="M19.500 10l2-2.500l2 2.500z" fill="#000080"/></svg>
<div class="t s" style="left:1805px;top:484px;">端口</div>
<svg style="left:1772px;top:512px;" width="24" height="24" viewBox="0 0 24 24"><path d="M6.500 4.500h-4.500v17.500h20v-17.500h-4.500" fill="#fff" stroke="#000" stroke-width="1.200"/><text x="7" y="7.500" font-family="Liberation Sans,sans-serif" font-size="7" font-weight="bold" fill="#000">CN</text></svg>
<div class="t s" style="left:1805px;top:514px;">分组框</div>
<svg style="left:1772px;top:542px;" width="24" height="24" viewBox="0 0 24 24"><rect x="-2.5" y="0" width="10" height="7.500" fill="#fff" stroke="#000" stroke-width="1.100"/><rect x="-0.5" y="1.6" width="6" height="4.300" fill="#c0c0c0"/><path d="M-4.0 10h13" stroke="#000" stroke-width="1.400"/><path d="M1.500 14.500v6h6.500" fill="none" stroke="#0000ff" stroke-width="1.500"/><path d="M7.500 17.500l3.500 3l-3.500 3z" fill="#0000ff"/><rect x="13.5" y="13.5" width="10" height="7.500" fill="#fff" stroke="#000" stroke-width="1.100"/><rect x="15.5" y="15.1" width="6" height="4.300" fill="#0000ff"/><path d="M12.0 23.5h13" stroke="#000" stroke-width="1.400"/></svg>
<div class="t s" style="left:1805px;top:544px;">服务器</div>
<svg style="left:1772px;top:572px;" width="24" height="24" viewBox="0 0 24 24"><path d="M1 16.500h22M8 11v5.500M16 11v5.500M22.500 9v7.500" stroke="#000" stroke-width="1.300" fill="none"/><path d="M6.500 9v6l-4.500-3zM17.500 9v6l4.500-3z" fill="#000"/><path d="M11.500 13v3.500" stroke="#000" stroke-width="1.300"/></svg>
<div class="t s" style="left:1805px;top:574px;">横向滚动条</div>
<svg style="left:1772px;top:602px;" width="24" height="24" viewBox="0 0 24 24"><path d="M5.500 9.500h16" stroke="#000" stroke-width="1.600"/><path d="M3.500 19.500h19" stroke="#000" stroke-width="1.600" stroke-dasharray="1.500 1.500"/><path d="M6.500 8l-3 7" stroke="#000" stroke-width="1.500"/></svg>
<div class="t s" style="left:1805px;top:604px;">滑块条</div>
<svg style="left:1772px;top:632px;" width="24" height="24" viewBox="0 0 24 24"><rect x="1.500" y="6.500" width="13" height="15" fill="#fff" stroke="#000" stroke-width="1.400"/><path d="M4 18.500l3.500-7l3.500 7z" fill="#ffff00" stroke="#0000c0" stroke-width="1.200"/><path d="M10 17l1.500-5l8-10l3 2l-8 10z" fill="#ffff00" stroke="#000" stroke-width="1.200"/><circle cx="21" cy="2.500" r="2" fill="#c00000"/></svg>
<div class="t s" style="left:1805px;top:634px;">画板</div>
<svg style="left:1772px;top:662px;" width="24" height="24" viewBox="0 0 24 24"><path d="M1.500 14V6.500h21" fill="none" stroke="#808080" stroke-width="1"/><path d="M4 10.500h12" stroke="#0000c0" stroke-width="3.500" stroke-dasharray="2 1.200"/></svg>
<div class="t s" style="left:1805px;top:664px;">进度条</div>
<svg style="left:1772px;top:692px;" width="24" height="24" viewBox="0 0 24 24"><rect x="-2.5" y="0" width="10" height="7.500" fill="#fff" stroke="#000" stroke-width="1.100"/><rect x="-0.5" y="1.6" width="6" height="4.300" fill="#0000ff"/><path d="M-4.0 10h13" stroke="#000" stroke-width="1.400"/><path d="M1.500 14.500v6h6.500" fill="none" stroke="#0000ff" stroke-width="1.500"/><path d="M7.500 17.500l3.500 3l-3.500 3z" fill="#0000ff"/><rect x="13.5" y="13.5" width="10" height="7.500" fill="#fff" stroke="#000" stroke-width="1.100"/><rect x="15.5" y="15.1" width="6" height="4.300" fill="#c0c0c0"/><path d="M12.0 23.5h13" stroke="#000" stroke-width="1.400"/></svg>
<div class="t s" style="left:1805px;top:694px;">客户</div>
<svg style="left:1772px;top:722px;" width="24" height="24" viewBox="0 0 24 24"><rect x="1.500" y="3" width="21" height="18" fill="#fff" stroke="#000" stroke-width="1.500"/><path d="M4 7.500h10M4 12h10M4 16.500h10" stroke="#000" stroke-width="1.300"/><path d="M17 3v18M17 12h5.500" stroke="#000" stroke-width="1.200"/><path d="M18.500 8.500l1.500-2.500l1.500 2.500zM18.500 15.500l1.500 2.500l1.500-2.500z" fill="#0000c0"/></svg>
<div class="t s" style="left:1805px;top:724px;">列表框</div>
<svg style="left:1772px;top:752px;" width="24" height="24" viewBox="0 0 24 24"><path d="M2.500 20V4.500h6l2 2.500h11.500v13z" fill="#ffff60" stroke="#a08000" stroke-width="1.200"/><text x="5" y="17" font-family="Liberation Sans,sans-serif" font-size="7.500" font-weight="bold" fill="#a06000">DIR</text></svg>
<div class="t s" style="left:1805px;top:754px;">目录框</div>
<svg style="left:1772px;top:782px;" width="24" height="24" viewBox="0 0 24 24"><rect x="1.500" y="6.500" width="21" height="12" rx="2" fill="#fff" stroke="#000" stroke-width="1.500"/><path d="M3 15.500h18" stroke="#000" stroke-width="1.200"/><path d="M5 10h5" stroke="#00a0a0" stroke-width="1.600"/><path d="M17 10h3" stroke="#e0e000" stroke-width="1.600"/></svg>
<div class="t s" style="left:1805px;top:784px;">驱动器框</div>
<svg style="left:1772px;top:812px;" width="24" height="24" viewBox="0 0 24 24"><rect x="2.500" y="3" width="18.500" height="18" fill="#fff" stroke="#000" stroke-width="1.400"/><path d="M2.500 7h18.500" stroke="#000" stroke-width="1.600"/><path d="M17 3l3 3" stroke="#000"/><path d="M4.500 10.500h4M4.500 13h3" stroke="#000" stroke-width="1.100"/><circle cx="13" cy="16" r="5" fill="#fff" stroke="#000" stroke-width="1.300"/><path d="M10 19.500l5-4.500v2.500" fill="none" stroke="#000" stroke-width="1.100"/></svg>
<div class="t s" style="left:1805px;top:814px;">日期框</div>
<div style="left:1891px;top:210px;width:20px;height:627px;background:#f0f0f0"></div>
<div style="left:1892px;top:230px;width:19px;height:284px;background:#cdcdcd"></div>
<svg style="left:1891px;top:210px;" width="20" height="627" viewBox="0 0 20 627"><path d="M5.500 11.500l4.500-4.500l4.500 4.500M5.500 611.500l4.500 4.500l4.500-4.500" fill="none" stroke="#555" stroke-width="2.400"/></svg>
<div style="left:1770px;top:837px;width:141px;height:18px;background:#f0f0f0"></div>
<div style="left:1790px;top:837px;width:66px;height:18px;background:#cdcdcd"></div>
<svg style="left:1770px;top:837px;" width="141" height="18" viewBox="0 0 141 18"><path d="M11.500 4.500l-4.500 4.500l4.500 4.500M107.500 4.500l4.500 4.500l-4.500 4.500" fill="none" stroke="#555" stroke-width="2.400"/></svg>
<div class="btn" style="left:1767px;top:864px;width:146px;height:25px;border-color:#fff #a0a0a0 #a0a0a0 #fff;box-shadow:none"></div>
<div class="t s" style="left:1767px;top:867px;width:146px;text-align:center">扩展组件</div>
<!-- p_bottom -->
<div style="left:0px;top:893px;width:1920px;height:7px;background:#f8f8f8;border-top:1px solid #a0a0a0;border-bottom:1px solid #a0a0a0"></div>
<div style="left:0px;top:894px;width:1920px;height:1px;background:#fff"></div>
<svg style="left:4px;top:905px;" width="14" height="14" viewBox="0 0 14 14"><rect width="14" height="14" fill="#f0f0f0"/><path d="M0.500 14V0.500H14" stroke="#fff" fill="none"/><path d="M13.5 0V13.5H0" stroke="#a0a0a0" fill="none"/><path d="M4.0 4.5l6 5.500M10.0 4.5l-6 5.500" stroke="#000" stroke-width="1.700"/></svg>
<svg style="left:4px;top:921px;" width="14" height="14" viewBox="0 0 14 14"><rect width="14" height="14" fill="#f0f0f0"/><path d="M0.500 14V0.500H14" stroke="#fff" fill="none"/><path d="M13.5 0V13.5H0" stroke="#a0a0a0" fill="none"/><rect x="3.8" y="4.5" width="6.400" height="6" fill="none" stroke="#000" stroke-width="1.400"/><path d="M3.2 4.5h7.600" stroke="#000" stroke-width="2"/></svg>
<div style="left:10px;top:940px;width:2px;height:82px;border-left:1px solid #fff;border-right:1px solid #a0a0a0"></div>
<div style="left:96px;top:905px;width:76px;height:27px;background:#f0f0f0;border:1px solid;border-color:#fff #696969 transparent #fff;box-shadow:inset -1px 0 0 #a0a0a0;border-radius:3px 3px 0 0"></div>
<div style="left:26px;top:908px;width:70px;height:23px;background:#f3f3f3;border:1px solid;border-color:#fff #f0f0f0 transparent #fff;border-radius:3px 3px 0 0"></div>
<svg style="left:33px;top:909px;" width="22" height="20" viewBox="0 0 22 20"><text x="2.500" y="19.500" font-family="Liberation Sans,sans-serif" font-size="23" font-weight="bold" fill="#e8e800" stroke="#000" stroke-width="1.400" paint-order="stroke">?</text></svg>
<div class="t s" style="left:60px;top:909px;">提示</div>
<svg style="left:103px;top:906px;" width="22" height="20" viewBox="0 0 22 20"><rect x="3.500" y="2" width="15" height="15.500" fill="#fff" stroke="#000" stroke-width="1.400"/><path d="M3.500 3.500h15" stroke="#000080" stroke-width="2.500"/><path d="M6 8h8M6 10.500h6M6 13h8M6 15.500h4" stroke="#000" stroke-width="1"/></svg>
<div class="t s" style="left:131px;top:906px;">输出</div>
<svg style="left:179px;top:909px;" width="22" height="20" viewBox="0 0 22 20"><path d="M3.500 3v15M8.500 3v15M13.500 3v15" stroke="#000" stroke-width="1.400"/><path d="M1.500 6.500h4M6.500 6.500h4M11.500 6.500h4M1.500 14.500h4M6.500 14.500h4M11.500 14.500h4" stroke="#000" stroke-width="1.300"/><path d="M0.500 10.500h15" stroke="#4040d0" stroke-width="1.200" stroke-dasharray="2 1"/></svg>
<div class="t s" style="left:204px;top:909px;">调用表</div>
<svg style="left:263px;top:909px;" width="22" height="20" viewBox="0 0 22 20"><circle cx="9" cy="8.500" r="7" fill="#fff" stroke="#000" stroke-width="1.500"/><path d="M14 13.500l6 6" stroke="#000" stroke-width="2.600"/></svg>
<div class="t s" style="left:292px;top:909px;">监视表</div>
<svg style="left:351px;top:909px;" width="22" height="20" viewBox="0 0 22 20"><path d="M1 9l5-5l5 5l-5 5z" fill="#ffff00" stroke="#000" stroke-width="1.300"/><path d="M1 9v2.500l5 5l5-5V9l-5 5z" fill="#808000" stroke="#000" stroke-width="0.800"/><path d="M11 9l5-5l5 5l-5 5z" fill="#fff" stroke="#000" stroke-width="1.300"/><path d="M11 9v2.500l5 5l5-5V9l-5 5z" fill="#a0a0a0" stroke="#000" stroke-width="0.800"/></svg>
<div class="t s" style="left:379px;top:909px;">变量表</div>
<svg style="left:439px;top:909px;" width="22" height="20" viewBox="0 0 22 20"><rect x="1.800" y="2" width="13" height="14.500" fill="#fff" stroke="#000" stroke-width="1.600"/><path d="M3 5.500h4M3 8h4M3 10.500h4M3 13h4" stroke="#000" stroke-width="1.200"/><circle cx="11" cy="9.500" r="4" fill="#f0f0f0" stroke="#000" stroke-width="1.300"/><path d="M14 13.500l5 5" stroke="#000" stroke-width="2.600"/></svg>
<div class="t s" style="left:467px;top:909px;">搜寻<b>1</b></div>
<svg style="left:519px;top:909px;" width="22" height="20" viewBox="0 0 22 20"><rect x="1.800" y="2" width="13" height="14.500" fill="#fff" stroke="#000" stroke-width="1.600"/><path d="M3 5.500h4M3 8h4M3 10.500h4M3 13h4" stroke="#000" stroke-width="1.200"/><circle cx="11" cy="9.500" r="4" fill="#f0f0f0" stroke="#000" stroke-width="1.300"/><path d="M14 13.500l5 5" stroke="#000" stroke-width="2.600"/></svg>
<div class="t s" style="left:547px;top:909px;">搜寻<b>2</b></div>
<svg style="left:599px;top:909px;" width="22" height="20" viewBox="0 0 22 20"><path d="M5 3h11v14.500h-11z" fill="#fff" stroke="#000" stroke-width="1.400"/><path d="M7.500 7h6M7.500 9.500h5M7.500 12h6M7.500 14.500h4" stroke="#000" stroke-width="1"/></svg>
<div class="t s" style="left:627px;top:909px;">剪辑历史</div>
<div style="left:171px;top:908px;width:2px;height:22px;border-left:1px solid #a0a0a0;border-right:1px solid #fff"></div>
<div style="left:256px;top:908px;width:2px;height:22px;border-left:1px solid #a0a0a0;border-right:1px solid #fff"></div>
<div style="left:344px;top:908px;width:2px;height:22px;border-left:1px solid #a0a0a0;border-right:1px solid #fff"></div>
<div style="left:431px;top:908px;width:2px;height:22px;border-left:1px solid #a0a0a0;border-right:1px solid #fff"></div>
<div style="left:511px;top:908px;width:2px;height:22px;border-left:1px solid #a0a0a0;border-right:1px solid #fff"></div>
<div style="left:591px;top:908px;width:2px;height:22px;border-left:1px solid #a0a0a0;border-right:1px solid #fff"></div>
<div style="left:692px;top:908px;width:2px;height:22px;border-left:1px solid #a0a0a0;border-right:1px solid #fff"></div>
<div style="left:24px;top:931px;width:1891px;height:91px;border:1px solid;border-color:#fff #696969 #696969 #fff;box-shadow:inset -1px -1px 0 #a0a0a0"></div>
<div style="left:27px;top:936px;width:1884px;height:80px;background:#fff;border:1px solid;border-color:#a0a0a0 #fff #fff #a0a0a0;box-shadow:inset 1px 1px 0 #696969, inset -1px -1px 0 #e3e3e3"></div>
<div style="left:1888px;top:938px;width:21px;height:76px;background:#f0f0f0"></div>
<svg style="left:1888px;top:938px;" width="20" height="76" viewBox="0 0 20 76"><path d="M5 14.500l4.500-4.500l4.500 4.500M5 62.500l4.500 4.500l4.500-4.500" fill="none" stroke="#c4c4c4" stroke-width="2"/></svg>
<div style="left:0px;top:1028px;width:1920px;height:2px;background:#fff;border-top:1px solid #a0a0a0"></div>
</body></html>
